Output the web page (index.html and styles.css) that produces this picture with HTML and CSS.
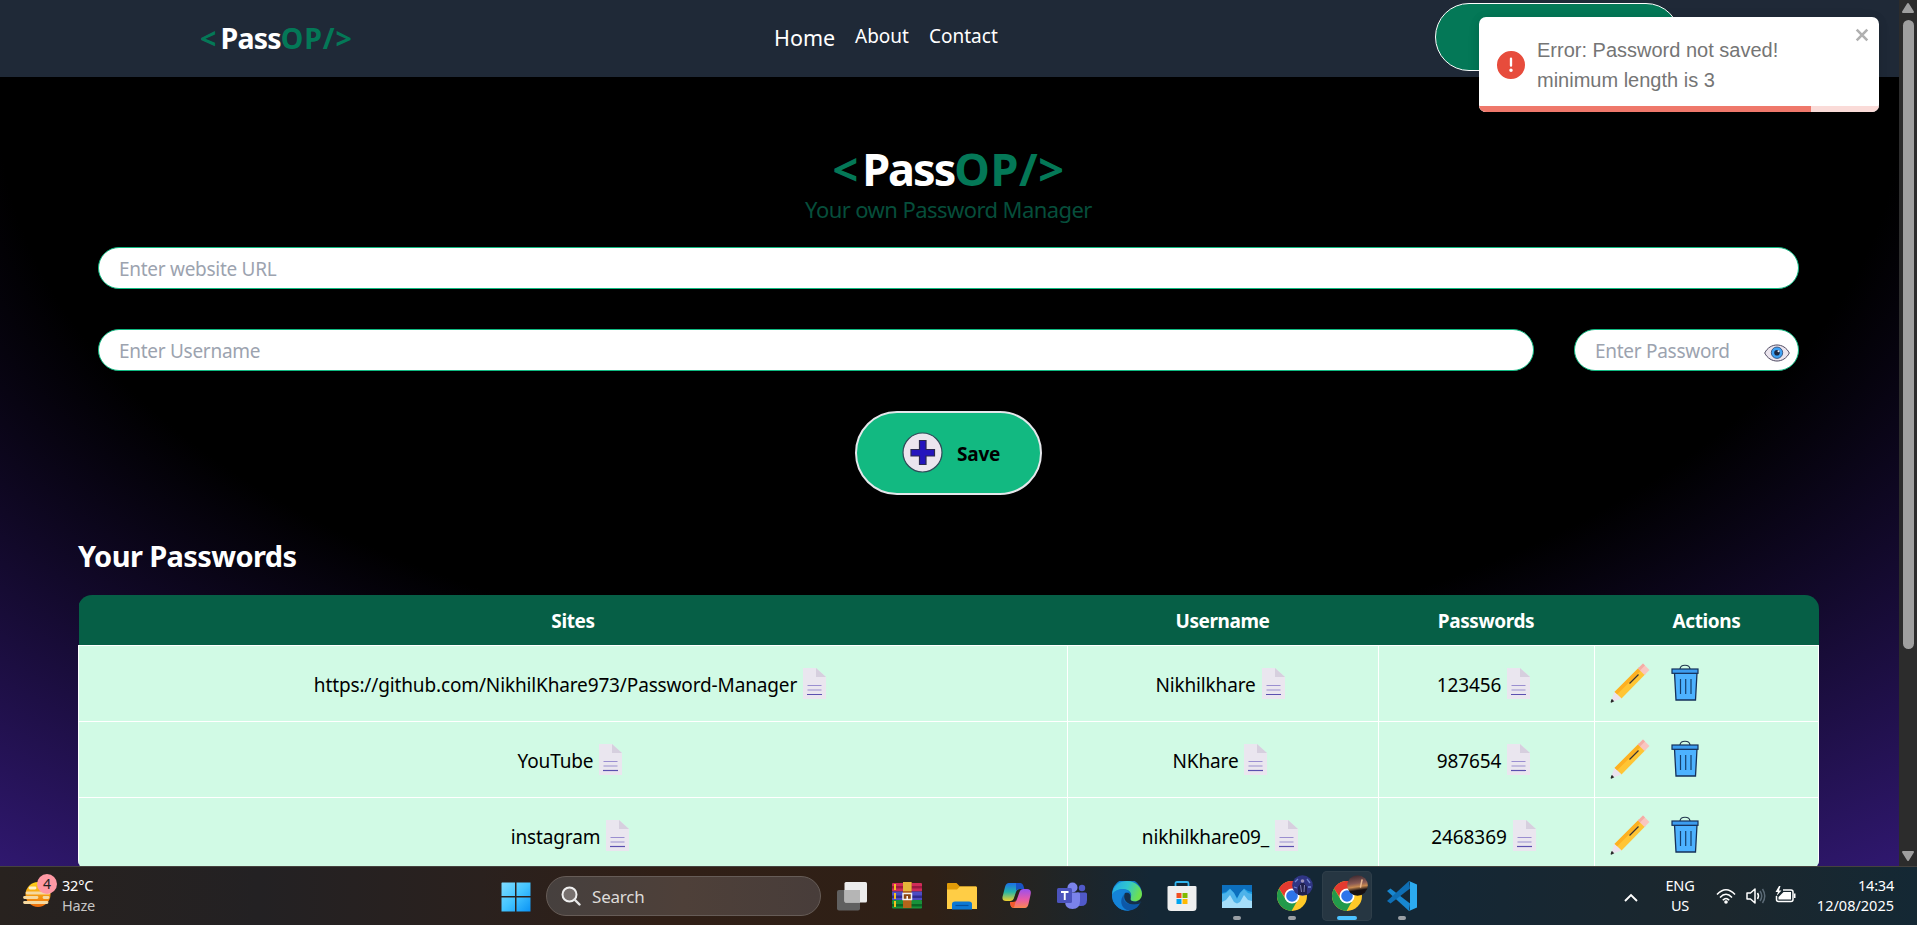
FILE: index.html
```html
<!DOCTYPE html>
<html lang="en">
<head>
<meta charset="utf-8">
<title>PassOP</title>
<link rel="stylesheet" href="styles.css">
</head>
<body>
<svg class="defs" width="0" height="0" aria-hidden="true">
  <symbol id="doc" viewBox="0 0 23 31">
    <path d="M0 0H13L23 9V31H0z" fill="#eae6ef"/><path d="M13 0V9H23z" fill="#d6cfde"/>
    <path d="M4.500 17.500H18.500M4.500 22H18.500" stroke="#9a8fd0" stroke-width="1.200"/><path d="M4 26.500H19" stroke="#5b50b0" stroke-width="1.200"/>
  </symbol>
  <symbol id="pencil" viewBox="0 0 40 40">
    <path d="M4.500 29L29 4.500 35.500 11 11.500 35.500z" fill="#ffc534"/><path d="M4.500 29L29 4.500 31.500 7 7 31.500z" fill="#fdb022"/>
    <path d="M28 5.500L33 .500 39.500 7 34.500 12z" fill="#f9c6c0"/><path d="M28 5.500L33 .500 35 2.500 30 7.500z" fill="#f4aca4"/>
    <path d="M4.500 29L11.500 35.500 .500 39.500z" fill="#ebe3ee"/><path d="M2 36.500L3.500 38.300 1 39.200z" fill="#222" stroke="#222" stroke-width="1"/>
    <path d="M19.500 20.500L28.500 11.500" stroke="#3c3230" stroke-width="1.200"/>
  </symbol>
  <symbol id="trash" viewBox="0 0 28 37">
    <path d="M9 5C9.500 0 18.500 0 19 5" fill="none" stroke="#22364e" stroke-width="1.200"/>
    <path d="M3.500 9L5 36H24.500L26 9z" fill="#4db2ff" stroke="#15305a" stroke-width="1.300"/>
    <rect x="1" y="5" width="26" height="4.300" fill="#3c9df0" stroke="#15305a" stroke-width="1.200"/>
    <path d="M9.500 15V30M14.700 15V30M20 15V30" stroke="#15406e" stroke-width="1.200"/>
  </symbol>
  <symbol id="chrome" viewBox="0 0 30 30">
    <circle cx="15" cy="15" r="15" fill="#ffc928"/>
    <path d="M15 8H28.300A15 15 0 0 0 2 7.500L9 18z" fill="#e53a30"/>
    <path d="M2 7.500L9 19 21 18.500 14.500 30A15 15 0 0 1 2 7.500z" fill="#229a4b"/>
    <circle cx="15" cy="15" r="7.500" fill="#fff"/><circle cx="15" cy="15" r="5.800" fill="#2d74ea"/>
  </symbol>
</svg>

<div class="browser">
  <main class="page">
    <nav class="nav">
      <div class="logo"><span class="green open">&lt;</span>Pass<span class="green end">OP/&gt;</span></div>
      <ul class="links"><li class="current">Home</li><li class="about">About</li><li class="contact">Contact</li></ul>
      <button class="github"><svg width="42" height="42" viewBox="0 0 42 42"><circle cx="21" cy="21" r="20" fill="#f3eccb"/></svg></button>
    </nav>

    <section class="hero">
      <h1 class="title"><span class="green open">&lt;</span>Pass<span class="green end">OP/&gt;</span></h1>
      <p class="tagline">Your own Password Manager</p>
      <form class="form">
        <div class="field">Enter website URL</div>
        <div class="form-row">
          <div class="field grow">Enter Username</div>
          <div class="field pass"><span>Enter Password</span>
            <svg class="eye" width="26" height="18" viewBox="0 0 26 18"><path d="M.700 9C6 -1.700 20 -1.700 25.300 9 20 19.700 6 19.700 .700 9z" fill="#ebe5ee" stroke="#4c4860"/><circle cx="13" cy="8.700" r="5.700" fill="#3fa2f4" stroke="#28426c" stroke-width=".8"/><circle cx="13" cy="8.700" r="2.800" fill="#1c2740"/><circle cx="14.500" cy="7.300" r="1" fill="#e8eef8"/></svg>
          </div>
        </div>
        <button type="button" class="save">
          <svg width="41" height="41" viewBox="0 0 41 41"><circle cx="20.500" cy="20.500" r="19.500" fill="#ebe5ee" stroke="#2f4a58" stroke-width="1.200"/><path d="M17.500 8.500H24V17.500H32.500V24H24V32.500H17.500V24H9V17.500H17.500z" fill="#2414bd" stroke="#2b2950" stroke-width="1.200"/></svg>
          <span>Save</span>
        </button>
      </form>
    </section>

    <section class="vault">
      <h2>Your Passwords</h2>
      <div class="table">
        <div class="row head"><div>Sites</div><div>Username</div><div>Passwords</div><div>Actions</div></div>
        <div class="row"><div class="cell"><span>https://github.com/NikhilKhare973/Password-Manager</span><svg class="doc"><use href="#doc"/></svg></div><div class="cell"><span>Nikhilkhare</span><svg class="doc"><use href="#doc"/></svg></div><div class="cell"><span class="num">123456</span><svg class="doc"><use href="#doc"/></svg></div><div class="cell actions"><svg class="pencil"><use href="#pencil"/></svg><svg class="trash"><use href="#trash"/></svg></div></div>
        <div class="row"><div class="cell"><span>YouTube</span><svg class="doc"><use href="#doc"/></svg></div><div class="cell"><span>NKhare</span><svg class="doc"><use href="#doc"/></svg></div><div class="cell"><span class="num">987654</span><svg class="doc"><use href="#doc"/></svg></div><div class="cell actions"><svg class="pencil"><use href="#pencil"/></svg><svg class="trash"><use href="#trash"/></svg></div></div>
        <div class="row"><div class="cell"><span>instagram</span><svg class="doc"><use href="#doc"/></svg></div><div class="cell"><span>nikhilkhare09_</span><svg class="doc"><use href="#doc"/></svg></div><div class="cell"><span class="num">2468369</span><svg class="doc"><use href="#doc"/></svg></div><div class="cell actions"><svg class="pencil"><use href="#pencil"/></svg><svg class="trash"><use href="#trash"/></svg></div></div>
      </div>
    </section>
  </main>

  <aside class="scrollbar">
    <svg width="14" height="12" viewBox="0 0 14 12"><path d="M7 2L12 10H2z" fill="#9f9f9f" stroke="#9f9f9f" stroke-width="2" stroke-linejoin="round"/></svg>
    <div class="thumb"></div>
    <svg class="down" width="14" height="12" viewBox="0 0 14 12"><path d="M7 10L2 2H12z" fill="#9f9f9f" stroke="#9f9f9f" stroke-width="2" stroke-linejoin="round"/></svg>
  </aside>

  <div class="toast">
    <svg class="alert" width="28" height="28" viewBox="0 0 24 24"><path fill="#e74c3c" d="M11.983 0a12.206 12.206 0 00-8.510 3.653A11.800 11.800 0 000 12.207 11.779 11.779 0 0011.800 24h.214A12.111 12.111 0 0024 11.791 11.766 11.766 0 0011.983 0zM10.500 16.542a1.476 1.476 0 011.449-1.530h.027a1.527 1.527 0 011.523 1.470 1.475 1.475 0 01-1.449 1.530h-.027a1.529 1.529 0 01-1.523-1.470zM11 12.500v-6a1 1 0 012 0v6a1 1 0 11-2 0z"/></svg>
    <div class="message">Error: Password not saved!<br>minimum length is 3</div>
    <svg class="close" width="14" height="14" viewBox="0 0 14 14"><path d="M1.700 1.700L12.300 12.300M12.300 1.700L1.700 12.300" stroke="#b0b0b0" stroke-width="2.600"/></svg>
    <div class="progress"><div class="bar"></div></div>
  </div>
</div>

<footer class="taskbar">
  <div class="weather">
    <div class="haze"><svg width="28" height="30" viewBox="0 0 28 30"><defs><linearGradient id="sun" x1="0" y1="0" x2="0" y2="1"><stop stop-color="#ffd21a"/><stop offset="1" stop-color="#ec6a0a"/></linearGradient></defs><circle cx="15" cy="14.500" r="12.500" fill="url(#sun)"/><path d="M4 13H26M1.500 17.500H14M21 17.500H25M1.500 22.500H24" stroke="#f5d9a0" stroke-width="2.800" stroke-linecap="round"/><path d="M7 8H12" stroke="#fff1c8" stroke-width="2.800" stroke-linecap="round"/></svg><b class="badge">4</b></div>
    <div class="temps"><span>32°C</span><span class="dim">Haze</span></div>
  </div>
  <svg class="start" width="30" height="30" viewBox="0 0 30 30"><defs><linearGradient id="win" x1="0" y1="0" x2="1" y2="1"><stop stop-color="#7fdcff"/><stop offset=".5" stop-color="#43c4ff"/><stop offset="1" stop-color="#0a93f5"/></linearGradient></defs><path fill="url(#win)" d="M1 .500H14V14H.500V1zM15.500 .500H29.500V14H15.500zM.500 15.500H14V29.500H.500zM15.500 15.500H29.500V29.500H15.500z"/></svg>
  <div class="search"><svg width="20" height="20" viewBox="0 0 20 20"><circle cx="8.500" cy="8.500" r="7" fill="#77706e" stroke="#f0f0f0" stroke-width="2"/><path d="M13.500 13.500L18.500 18.500" stroke="#e6e6e6" stroke-width="2.400" stroke-linecap="round"/></svg><span>Search</span></div>
  <div class="apps">
    <div class="app"><svg width="30" height="29" viewBox="0 0 30 29"><rect y="8" width="23" height="20.500" rx="2" fill="#606060"/><rect x="7.500" width="22.500" height="20.500" rx="1.500" fill="#ededed"/><path d="M7.500 8H23V20.500H9Q7.500 20.500 7.500 19z" fill="#b5b5b5"/></svg></div>
    <div class="app"><svg class="up1" width="30" height="27" viewBox="0 0 30 27"><rect y="1" width="30" height="8.500" rx="1" fill="#cf2c58"/><rect y="4" width="30" height="2.500" fill="#9c1842"/><rect y="9.500" width="30" height="8.500" fill="#4d4cc4"/><rect y="13.500" width="30" height="2.500" fill="#2f2b8c"/><rect y="18" width="30" height="8.500" rx="1" fill="#18923a"/><rect y="22" width="30" height="2.500" fill="#0b6426"/><path d="M3 2V8M3 11V17M3 19V25" stroke="#f5c022" stroke-width="2"/><rect x="11" width="8.500" height="26" fill="#b5641a"/><rect x="11" width="8.500" height="9" fill="#e5b53a"/><path d="M11 11.500H19.500V17.500H11z" fill="#8a4310" stroke="#f0f0f0" stroke-width="1.500"/><path d="M15.200 14V18" stroke="#fff" stroke-width="1.500"/></svg></div>
    <div class="app"><svg width="30" height="28" viewBox="0 0 30 28"><path d="M0 2Q0 1 1 1H9.500L13 4.500H29Q30 4.500 30 6V27H0z" fill="#e09b08"/><path d="M0 7.500H10L13 4.500H29Q30 4.500 30 6V27H0z" fill="#ffcd45"/><path d="M5 27.500V22Q5 19.500 8 19.500H22Q25 19.500 25 22V27.500z" fill="#0d78d4"/><path d="M8.500 23.500H21.500" stroke="#074f9c" stroke-width="1.200"/></svg></div>
    <div class="app"><svg width="30" height="28" viewBox="0 0 30 28"><defs><linearGradient id="cpa" x1="0" y1="0" x2="0" y2="1"><stop stop-color="#1b6fe8"/><stop offset=".5" stop-color="#25b4a8"/><stop offset="1" stop-color="#f0d02c"/></linearGradient><linearGradient id="cpb" x1="0" y1="0" x2="0" y2="1"><stop stop-color="#9a50ee"/><stop offset=".55" stop-color="#e85aa8"/><stop offset="1" stop-color="#fa8850"/></linearGradient></defs><path d="M7 1H17Q19.500 1 20.500 4L21.500 7H18Q15 7 14 10L12 16Q11 19 8 19H4Q-1 19 1 13L3 5Q4 1 7 1z" fill="url(#cpa)"/><path d="M14 1H18Q20.500 1 21.500 4L22.300 7H17Q15 7 14 9z" fill="#1952c4"/><path d="M23 26H12Q9 26 8.500 23L8 20.500H11Q14 20.500 15 17L17.500 10Q18.500 7 21.500 7H25Q30 7 28.500 13L26.500 22Q25.500 26 23 26z" fill="url(#cpb)"/><path d="M8 20H11Q13 20 14 18L12 25.500Q9 26 8.500 23z" fill="#f25a2c"/><path d="M17.500 8.500L13 19.500 11.500 18.500 15 9z" fill="#2a2119"/></svg></div>
    <div class="app"><svg width="30" height="28" viewBox="0 0 30 28"><circle cx="25" cy="6" r="3.200" fill="#5059c9"/><circle cx="15.500" cy="5.500" r="5" fill="#7b83eb"/><path d="M20 10.500H28.500Q30 10.500 30 12V18Q30 24 24 24H20z" fill="#5059c9"/><path d="M8 10.500H21.500Q23 10.500 23 12V19Q23 27 15.500 27T8 19z" fill="#7b83eb"/><rect y="6" width="15" height="15" rx="1.500" fill="#4b53bc"/><path d="M4 10H11.500M7.750 10V18" stroke="#fff" stroke-width="1.900"/></svg></div>
    <div class="app"><svg width="30" height="30" viewBox="0 0 30 30"><defs><linearGradient id="eda" x1="0" y1="0" x2="1" y2=".3"><stop stop-color="#20a6ea"/><stop offset=".55" stop-color="#30c6d0"/><stop offset="1" stop-color="#6de050"/></linearGradient><linearGradient id="edb" x1="0" y1="0" x2="1" y2="1"><stop stop-color="#1692e2"/><stop offset="1" stop-color="#0b4f9c"/></linearGradient></defs><path d="M0 13A15 15 0 0 1 30 13L17 17 28 22A15 15 0 0 1 0 14z" fill="url(#edb)"/><path d="M0 14C1 4 8 0 15 0C24 0 30 7 30 13C30 18 26 20.500 22 20.500C18 20.500 18 18.500 18.500 17C21 12 17 8 11 8C6 8 1.500 10.500 0 14z" fill="url(#eda)"/><path d="M12 13C7 19 10 27 18 29.500C8 31 0 23 0 14C3 8 13 6 17.500 11.500C15 10.500 13 11.500 12 13z" fill="#1483d8"/><path d="M13 12C10 18 15 25 26 23.500L29.500 22 28.500 20Q27 21 22 20.500Q18 20 18.500 17Q19 11 13 12z" fill="#15304a"/><path d="M12 14C10 20 14 26 28 22.500C25 28 20 30 15 29C8 26 8 18 12 14z" fill="#0d58a8"/></svg></div>
    <div class="app"><svg width="30" height="30" viewBox="0 0 30 30"><path d="M8.500 6V2.500Q8.500 1 10 1H20Q21.500 1 21.500 2.500V6" fill="none" stroke="#31b4ee" stroke-width="1.800"/><path d="M.500 6Q.500 5 2 5H28Q29.500 5 29.500 6V26.500Q29.500 30 26 30H4Q.500 30 .500 26.500z" fill="#efefef"/><path d="M9.500 12H14.500V17H9.500z" fill="#f25022"/><path d="M15.500 12H20.500V17H15.500z" fill="#7fba00"/><path d="M9.500 18H14.500V23H9.500z" fill="#00a4ef"/><path d="M15.500 18H20.500V23H15.500z" fill="#ffb900"/></svg></div>
    <div class="app"><svg width="30" height="23" viewBox="0 0 30 23"><rect width="30" height="23" rx="1" fill="#1b9de2"/><path d="M0 0H30V7L26 6 22 3.500 18 8 15 13 12 8 8 3.500 4 7 0 8z" fill="#0d6fbd"/><path d="M0 9L4 8 8 4 12 8 15 14 18 8 22 4 26 8 30 9V23H0z" fill="#4eb3ea"/><path d="M0 17L4 15 8 10 12 17 15 18.500 18 17 22 10 26 15 30 16V23H0z" fill="#a5defa"/></svg><i class="dot"></i></div>
    <div class="app"><svg width="30" height="30"><use href="#chrome"/></svg><svg class="avatar" width="21" height="21" viewBox="0 0 21 21"><circle cx="10.500" cy="10.500" r="10.300" fill="#2f3584"/><path d="M6 20V12L9 8H12L15 12V20z" fill="#20214c"/><path d="M3 7L6 4M15 4L18 8M2 12L5 13M16 12H19" stroke="#6f86cf" stroke-width="1.300"/><circle cx="10.500" cy="6" r="1.800" fill="#9c92b8"/><path d="M8.500 10L9.500 17M12.500 10L12 17" stroke="#8082b4"/></svg><i class="dot"></i></div>
    <div class="app active"><svg width="30" height="30"><use href="#chrome"/></svg><svg class="avatar" width="21" height="21" viewBox="0 0 21 21"><defs><linearGradient id="dusk" x1="0" y1="0" x2=".15" y2="1"><stop stop-color="#33222a"/><stop offset=".45" stop-color="#8a5a55"/><stop offset=".62" stop-color="#c98a50"/><stop offset=".8" stop-color="#161014"/></linearGradient></defs><circle cx="10.500" cy="10.500" r="10.300" fill="url(#dusk)"/><path d="M15 5L13.500 12" stroke="#e8b890" stroke-width="1.500" stroke-linecap="round"/></svg><i class="dot wide"></i></div>
    <div class="app"><svg width="30" height="30" viewBox="0 0 30 30"><path d="M22 30L0 10 3.500 7.500 23 22.500z" fill="#1887d0"/><path d="M22 0L0 20 3.500 22.500 23 7.500z" fill="#0f6fb5"/><path d="M22 0L30 3.500V26.500L22 30Q23 29 23 27V3Q23 1 22 0z" fill="#2cabf0"/></svg><i class="dot"></i></div>
  </div>
  <div class="tray">
    <svg class="chev" width="14" height="9" viewBox="0 0 14 9"><path d="M1 8L7 2 13 8" fill="none" stroke="#fff" stroke-width="1.900"/></svg>
    <div class="lang"><span>ENG</span><span>US</span></div>
    <svg class="wifi" width="20" height="16" viewBox="0 0 20 16"><path d="M1 6.500Q10 -3 19 6.500M4 9.500Q10 3 16 9.500M6.800 12.300Q10 8.500 13.200 12.300" fill="none" stroke="#fff" stroke-width="1.500"/><circle cx="10" cy="14" r="1.800" fill="#fff"/></svg>
    <svg class="sound" width="20" height="18" viewBox="0 0 20 18"><path d="M1 6H4.500L9 2V16L4.500 12H1z" fill="none" stroke="#fff" stroke-width="1.500" stroke-linejoin="round"/><path d="M11.500 6Q13.500 9 11.500 12" fill="none" stroke="#fff" stroke-width="1.500"/><path d="M14 4Q17.500 9 14 14M16.500 2Q21 9 16.500 16" fill="none" stroke="#5b6a76" stroke-width="1.500"/></svg>
    <svg class="battery" width="21" height="17" viewBox="0 0 21 17"><path d="M8 4H16Q18 4 18 6V13.500Q18 15.500 16 15.500H3.500Q1.500 15.500 1.500 13.500V10" fill="none" stroke="#fff" stroke-width="1.500"/><path d="M8.500 6H16V13.500H3.500V11z" fill="#fff"/><path d="M19 7.500H20.500V12H19z" fill="#fff"/><path d="M4 0L.500 6H3L1.500 10 6.500 4.500H4L5.500 0z" fill="#fff"/></svg>
    <div class="clock"><span>14:34</span><span class="date">12/08/2025</span></div>
  </div>
</footer>
</body>
</html>
```
FILE: styles.css
```css
* { box-sizing: border-box; margin: 0; padding: 0; }
body { width: 1917px; height: 925px; overflow: hidden; background: #000; color: #fff; font-family: "Noto Sans", "Open Sans", sans-serif; }
svg { display: block; flex: none; }
.defs { position: absolute; }
button { font: inherit; }
.browser { position: relative; display: flex; height: 866px; overflow: hidden; }
.page { width: 1899px; height: 1100px; background: radial-gradient(125% 125% at 50% 10%, #000 40%, #6633ee 100%); }
.green { color: #047857; }

.nav { display: flex; height: 77px; padding-left: 200px; background: #1f2937; white-space: nowrap; }
.logo { width: 574px; padding-top: 18px; font-size: 28.500px; line-height: 40px; font-weight: 700; letter-spacing: -.8px; }
.logo .open { margin-right: 5px; }
.logo .end { letter-spacing: .9px; }
.links { display: flex; width: 661px; list-style: none; font-size: 19px; line-height: 30px; padding-top: 21px; }
.current { width: 81px; font-size: 21.500px; line-height: 33px; }
.about { width: 74px; }
.github { width: 245px; height: 68px; margin-top: 3px; padding: 9px 0 0 46px; background: #047857; border: 1.500px solid #fff; border-radius: 34px; }

.hero { padding: 67px 100px 0 98px; text-align: center; }
.title { font-size: 45px; line-height: 50px; font-weight: 700; letter-spacing: -2px; }
.title .open { margin-right: 6px; }
.title .end { letter-spacing: .6px; }
.tagline { margin-top: -1px; font-size: 22px; line-height: 32px; color: #064e3b; letter-spacing: -.57px; }
.form { display: flex; flex-direction: column; gap: 40px; align-items: stretch; margin-top: 22px; }
.form-row { display: flex; gap: 40px; }
.field { height: 42px; padding: 2px 20px 0; border: 1px solid #10b981; border-radius: 21px; background: #fff; color: #9ca3af; font-size: 19px; line-height: 39px; letter-spacing: -.28px; text-align: left; }
.grow { flex: 1; }
.pass { display: flex; width: 225px; padding-right: 8px; justify-content: space-between; white-space: nowrap; }
.eye { margin-top: 12px; }
.save { display: flex; align-self: center; align-items: center; gap: 14px; width: 187px; height: 84px; padding: 0 0 1px 45px; border: 2px solid #e5e7eb; border-radius: 42px; background: #12b981; color: #000; font-size: 19px; font-weight: 700; }
.save span { padding-top: 3px; letter-spacing: -.2px; }

.vault { padding: 37px 80px 0 78px; }
.vault h2 { font-size: 29px; line-height: 48px; font-weight: 700; letter-spacing: -.6px; }
.table { margin-top: 15px; border-radius: 14px; overflow: hidden; font-size: 19px; width: 1741px; }
.row { display: grid; grid-template-columns: 989px 311px 216px 225px; height: 76px; }
.head { height: 50px; margin-left: 1px; grid-template-columns: 988px 311px 216px 225px; background: #065f46; font-weight: 700; line-height: 50px; text-align: center; letter-spacing: -.4px; }
.head > div { padding-top: 1px; }
.cell { display: flex; align-items: center; justify-content: center; gap: 6px; padding: 0 6px 1px 0; background: #d1fae5; border-top: 1px solid #fff; border-left: 1px solid #fff; color: #000; }
.cell:last-child { border-right: 1px solid #fff; }
.cell span { padding-top: 3px; white-space: nowrap; letter-spacing: -.14px; }
.cell .num { letter-spacing: -.1px; }
.doc { width: 23px; height: 31px; }
.actions { justify-content: flex-start; padding: 0 0 2px 15px; gap: 21px; }
.pencil { width: 40px; height: 40px; }
.trash { width: 28px; height: 37px; }

.scrollbar { display: flex; flex-direction: column; align-items: center; width: 18px; height: 866px; padding: 2px 0 4px; background: #2c2c2c; }
.thumb { width: 11px; height: 629px; margin-top: 6px; border-radius: 6px; background: #9f9f9f; }
.down { margin-top: auto; }

.toast { position: absolute; left: 1479px; top: 17px; display: flex; width: 400px; height: 95px; padding: 0 10px 0 18px; border-radius: 7px; overflow: hidden; background: #fff; color: #757575; font: 20px/30px "Liberation Sans", Arial, sans-serif; box-shadow: 0 1px 10px rgba(0,0,0,.1), 0 2px 15px rgba(0,0,0,.05); }
.alert { margin-top: 34px; }
.message { margin: 18px 0 0 12px; }
.close { margin: 11px 0 0 auto; }
.progress { position: absolute; left: 0; bottom: 0; width: 100%; height: 6px; background: #fadbd8; }
.bar { width: 332px; height: 6px; background: #ef786b; }

.taskbar { display: flex; height: 59px; border-top: 1px solid #45423e; background: linear-gradient(90deg, #28221f 0, #232123 260px, #2a211e 480px, #301f16 660px, #2f2016 930px, #232423 1040px, #142735 1150px, #142735 1430px, #1c272d 1720px, #142834 1917px); font-size: 14.500px; letter-spacing: -.2px; }
.weather { display: flex; width: 501px; padding-left: 23px; }
.haze { position: relative; width: 39px; padding-top: 13px; }
.badge { position: absolute; left: 14px; top: 7px; width: 20px; height: 20px; border-radius: 50%; background: #ff99a4; color: #222; font-size: 14px; font-weight: 400; line-height: 20px; text-align: center; }
.temps, .lang, .clock { display: flex; flex-direction: column; padding-top: 8px; line-height: 20px; }
.dim { color: #c8c6c5; }
.start { margin-top: 15px; }
.search { display: flex; align-items: center; gap: 11px; width: 275px; height: 40px; margin: 9px 3px 0 15px; padding-left: 14px; border: 1px solid #665c57; border-radius: 20px; background: linear-gradient(90deg, #46403e, #4e4039 50%, #483d3a); color: #dedbd9; font-size: 17px; }
.apps { display: flex; }
.app { position: relative; display: flex; align-items: center; justify-content: center; width: 50px; height: 50px; margin: 4px 2.500px 0; }
.active { border-radius: 5px; background: #263642; box-shadow: inset 0 0 0 1px #2e3e49; }
.up1 { margin-bottom: 2px; }
.avatar { position: absolute; left: 25px; top: 4px; }
.dot { position: absolute; left: 21px; bottom: 1px; width: 8px; height: 4px; border-radius: 2px; background: #9a9fa4; }
.wide { left: 15px; width: 20px; background: #4cc2ff; }
.tray { display: flex; margin-left: auto; padding-right: 23px; }
.chev { margin: 26px 27px 0 0; }
.lang { width: 30px; align-items: center; margin-right: 21px; }
.wifi { margin: 21px 10px 0 0; }
.sound { margin: 20px 9px 0 0; }
.battery { margin: 19px 20px 0 0; }
.clock { align-items: flex-end; width: 78px; }
.date { letter-spacing: 0; }
```
